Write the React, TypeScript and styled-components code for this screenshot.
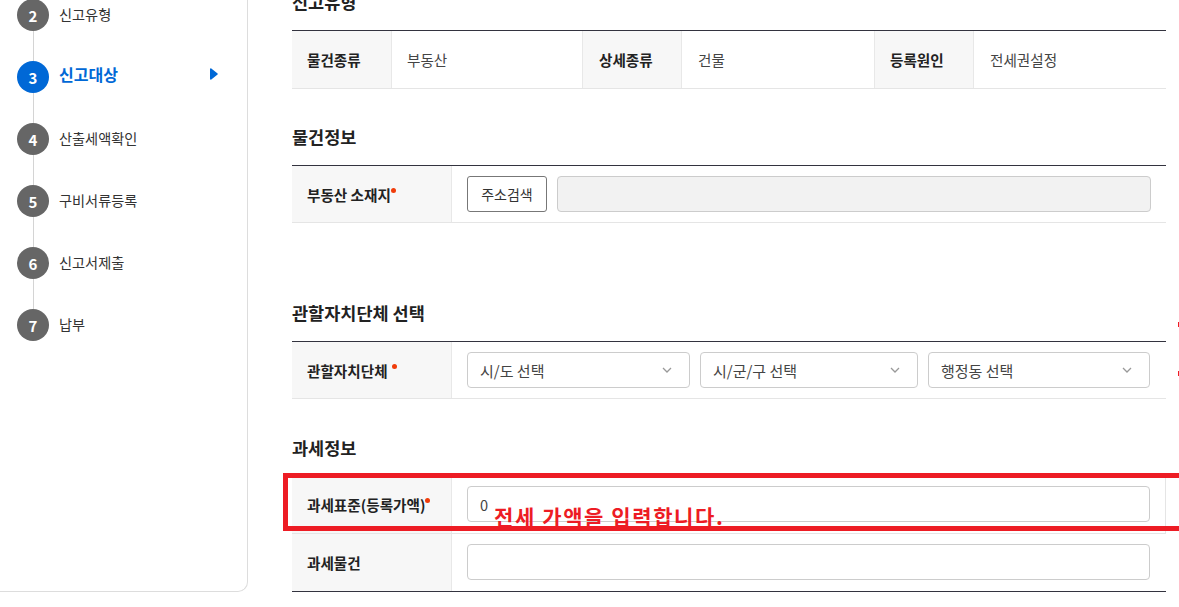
import React from "react";
import styled, { createGlobalStyle } from "styled-components";

const Global = createGlobalStyle`
  html, body { margin: 0; padding: 0; background: #fff; }
  body { font-family: "Noto Sans CJK KR", "Noto Sans", sans-serif; color: #222; }
  * { box-sizing: border-box; }
`;

const Page = styled.div`
  position: relative;
  display: flex;
  width: 1179px;
  height: 607px;
  overflow: hidden;
`;

const Sidebar = styled.aside`
  flex: none;
  width: 248px;
  height: 592px;
  border-right: 1px solid #ddd;
  border-bottom: 1px solid #ddd;
  border-bottom-right-radius: 10px;
  padding-left: 17px;
`;

const Steps = styled.ol`
  list-style: none;
  margin: -16px 0 0;
  padding: 0;
`;

const Step = styled.li`
  position: relative;
  display: flex;
  align-items: center;
  gap: 10px;
  height: 62px;
  padding-right: 29px;
  &:not(:last-child)::after {
    content: "";
    position: absolute;
    left: 15.5px;
    top: 47px;
    width: 1px;
    height: 30px;
    background: #d4d4d4;
  }
  svg { margin-bottom: 7px; }
`;

const Badge = styled.span<{ $active?: boolean }>`
  flex: none;
  display: flex;
  align-items: center;
  justify-content: center;
  width: 32px;
  height: 32px;
  border-radius: 50%;
  background: ${(p) => (p.$active ? "#0068d6" : "#666")};
  color: #fff;
  font-size: 15px;
  font-weight: 700;
`;

const StepLabel = styled.span<{ $active?: boolean }>`
  flex: 1;
  padding-bottom: ${(p) => (p.$active ? 6 : 2)}px;
  font-size: ${(p) => (p.$active ? "16px" : "14.2px")};
  font-weight: ${(p) => (p.$active ? 700 : 400)};
  color: ${(p) => (p.$active ? "#0068d6" : "#333")};
`;

const Main = styled.main`
  flex: none;
  width: 874px;
  margin: -12px 0 0 44px;
`;

const Title = styled.h3<{ $top?: number; $bottom?: number }>`
  margin: ${(p) => p.$top ?? 0}px 0 ${(p) => p.$bottom ?? 14}px;
  height: 28px;
  line-height: 28px;
  font-size: 17.5px;
  font-weight: 700;
  color: #222;
`;

const Table = styled.div`
  border-top: 1px solid #33333f;
`;

const TaxTable = styled(Table)`
  border-bottom: 1px solid #33333f;
`;

const Row = styled.div<{ $cols: string; $edge?: boolean; $last?: boolean; $h?: number }>`
  display: grid;
  grid-template-columns: ${(p) => p.$cols};
  height: ${(p) => p.$h ?? 57}px;
  border-bottom: ${(p) => (p.$last ? "none" : "1px solid #e5e5e5")};
  border-right: ${(p) => (p.$edge ? "1px solid #e5e5e5" : "none")};
`;

const Head = styled.div<{ $lead?: boolean; $pad?: number; $bottom?: number }>`
  display: flex;
  align-items: center;
  padding: 0 0 ${(p) => p.$bottom ?? 0}px ${(p) => p.$pad ?? 15}px;
  background: #f7f7f7;
  border-right: 1px solid #e8e8e8;
  border-left: ${(p) => (p.$lead ? "none" : "1px solid #e8e8e8")};
  font-size: 14.6px;
  font-weight: 700;
  color: #222;
  white-space: nowrap;
`;

const Required = styled.i<{ $gap?: number }>`
  display: inline-block;
  width: 5px;
  height: 5px;
  margin-left: ${(p) => p.$gap ?? 0}px;
  border-radius: 50%;
  background: #f03c0a;
  vertical-align: 8px;
`;

const Value = styled.div<{ $pad?: number }>`
  display: flex;
  align-items: center;
  padding-left: ${(p) => p.$pad ?? 15}px;
  font-size: 14.6px;
  color: #444;
`;

const Fields = styled.div<{ $cols: string; $right?: number; $bottom?: number }>`
  display: grid;
  grid-template-columns: ${(p) => p.$cols};
  gap: 10px;
  align-items: center;
  padding: 0 ${(p) => p.$right ?? 15}px ${(p) => p.$bottom ?? 0}px 15px;
`;

const Button = styled.button`
  height: 36px;
  padding: 0;
  background: #fff;
  border: 1px solid #777;
  border-radius: 3px;
  font: 400 14px "Noto Sans CJK KR", sans-serif;
  color: #333;
`;

const Input = styled.input`
  width: 100%;
  height: 36px;
  padding: 0 12px;
  background: ${(p) => (p.disabled ? "#f2f2f2" : "#fff")};
  border: 1px solid #ccc;
  border-radius: 4px;
  font: 400 14.6px "Noto Sans CJK KR", sans-serif;
  color: #444;
  outline: none;
`;

const Select = styled.div`
  display: flex;
  align-items: center;
  justify-content: space-between;
  height: 36px;
  padding: 0 17px 0 12px;
  border: 1px solid #ccc;
  border-radius: 4px;
  font-size: 15px;
  color: #444;
  svg { flex: none; }
`;

const Highlight = styled.div`
  position: absolute;
  left: 283px;
  top: 473px;
  width: 910px;
  height: 58px;
  border: 5px solid #ed1c24;
  pointer-events: none;
`;

const Note = styled.div`
  position: absolute;
  left: 494px;
  top: 501px;
  font-size: 21px;
  line-height: 30px;
  font-weight: 700;
  color: #ed1c24;
  letter-spacing: 1.6px;
  white-space: nowrap;
`;

const Tick = styled.div<{ $y: number }>`
  position: absolute;
  left: 1178px;
  top: ${(p) => p.$y}px;
  width: 1px;
  height: 5px;
  background: #ed1c24;
`;

const Chevron = () => (
  <svg width="10" height="6" viewBox="0 0 10 6" fill="none">
    <path d="M1 1l4 4 4-4" stroke="#999" strokeWidth="1.3" />
  </svg>
);

const Arrow = () => (
  <svg width="9" height="12" viewBox="0 0 9 12">
    <path d="M1 1.2c0-.8.7-1.1 1.3-.7l6 4.7c.6.4.6 1.2 0 1.6l-6 4.7c-.6.4-1.3.1-1.3-.7z" fill="#0068d6" />
  </svg>
);

const steps = [
  [2, "신고유형"],
  [3, "신고대상"],
  [4, "산출세액확인"],
  [5, "구비서류등록"],
  [6, "신고서제출"],
  [7, "납부"],
] as const;

const FIELD_COLS = "160px 1fr";

export default function App() {
  return (
    <Page>
      <Global />
      <Sidebar>
        <Steps>
          {steps.map(([n, label]) => (
            <Step key={n}>
              <Badge $active={n === 3}>{n}</Badge>
              <StepLabel $active={n === 3}>{label}</StepLabel>
              {n === 3 && <Arrow />}
            </Step>
          ))}
        </Steps>
      </Sidebar>
      <Main>
        <Title>신고유형</Title>
        <Table>
          <Row $h={58} $cols="100px 190px 100px 192px 100px 1fr">
            <Head $lead>물건종류</Head>
            <Value>부동산</Value>
            <Head $pad={16}>상세종류</Head>
            <Value $pad={16}>건물</Value>
            <Head>등록원인</Head>
            <Value $pad={16}>전세권설정</Value>
          </Row>
        </Table>

        <Title $top={34}>물건정보</Title>
        <Table>
          <Row $cols={FIELD_COLS}>
            <Head $lead><span>부동산 소재지<Required /></span></Head>
            <Fields $cols="80px 1fr">
              <Button>주소검색</Button>
              <Input disabled />
            </Fields>
          </Row>
        </Table>

        <Title $top={76}>관할자치단체 선택</Title>
        <Table>
          <Row $cols={FIELD_COLS}>
            <Head $lead><span>관할자치단체<Required $gap={4} /></span></Head>
            <Fields $cols="223px 218px 222px">
              <Select>시/도 선택<Chevron /></Select>
              <Select>시/군/구 선택<Chevron /></Select>
              <Select>행정동 선택<Chevron /></Select>
            </Fields>
          </Row>
        </Table>

        <Title $top={35} $bottom={13}>과세정보</Title>
        <TaxTable>
          <Row $h={58} $cols={FIELD_COLS} $edge>
            <Head $lead><span>과세표준(등록가액)<Required /></span></Head>
            <Fields $cols="1fr" $bottom={1}>
              <Input readOnly value="0" />
            </Fields>
          </Row>
          <Row $cols={FIELD_COLS} $last>
            <Head $lead $bottom={1}>과세물건</Head>
            <Fields $cols="1fr" $right={16} $bottom={1}>
              <Input readOnly />
            </Fields>
          </Row>
        </TaxTable>
      </Main>
      <Highlight />
      <Note>전세 가액을 입력합니다.</Note>
      <Tick $y={322} />
      <Tick $y={371} />
    </Page>
  );
}
